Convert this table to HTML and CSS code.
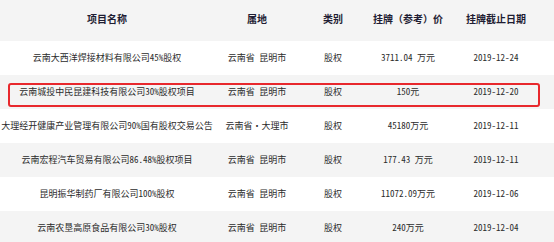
FILE: index.html
```html
<!DOCTYPE html>
<html lang="zh-CN">
<head>
<meta charset="utf-8">
<title>挂牌项目</title>
<link rel="stylesheet" href="styles.css">
</head>
<body>
<div class="table">
  <div class="row head">
    <div class="c">项目名称</div>
    <div class="c">属地</div>
    <div class="c">类别</div>
    <div class="c">挂牌（参考）价</div>
    <div class="c">挂牌截止日期</div>
  </div>
  <div class="row">
    <div class="c">云南大西洋焊接材料有限公司45%股权</div>
    <div class="c">云南省 昆明市</div>
    <div class="c">股权</div>
    <div class="c">3711.04 万元</div>
    <div class="c">2019-12-24</div>
  </div>
  <div class="row alt hl">
    <div class="c">云南城投中民昆建科技有限公司30%股权项目</div>
    <div class="c">云南省 昆明市</div>
    <div class="c">股权</div>
    <div class="c">150元</div>
    <div class="c">2019-12-20</div>
    <div class="mark"></div>
  </div>
  <div class="row">
    <div class="c wide">大理经开健康产业管理有限公司90%国有股权交易公告</div>
    <div class="c">云南省・大理市</div>
    <div class="c">股权</div>
    <div class="c">45180万元</div>
    <div class="c">2019-12-11</div>
  </div>
  <div class="row alt">
    <div class="c">云南宏程汽车贸易有限公司86.48%股权项目</div>
    <div class="c">云南省 昆明市</div>
    <div class="c">股权</div>
    <div class="c">177.43 万元</div>
    <div class="c">2019-12-11</div>
  </div>
  <div class="row">
    <div class="c">昆明振华制药厂有限公司100%股权</div>
    <div class="c">云南省 昆明市</div>
    <div class="c">股权</div>
    <div class="c">11072.09万元</div>
    <div class="c">2019-12-06</div>
  </div>
  <div class="row alt">
    <div class="c">云南农垦高原食品有限公司30%股权</div>
    <div class="c">云南省 昆明市</div>
    <div class="c">股权</div>
    <div class="c">240万元</div>
    <div class="c">2019-12-04</div>
  </div>
</div>
</body>
</html>
```
FILE: styles.css
```css
html, body {
  margin: 0;
  padding: 0;
  background: #ffffff;
}
.table {
  width: 554px;
  font-family: "Noto Sans Mono CJK SC", "Noto Sans CJK SC", "DejaVu Sans", sans-serif;
  font-size: 9px;
  color: #2b2b2b;
}
.row {
  display: grid;
  grid-template-columns: 214px 86px 66px 84px 92px 12px;
  height: 34px;
  align-items: center;
  position: relative;
}
.row.head {
  height: 41px;
  background: #f4f4f4;
  font-size: 10px;
  font-weight: bold;
  color: #1f1d33;
  font-family: "Noto Sans CJK SC", sans-serif;
  padding-bottom: 3px;
  box-sizing: border-box;
}
.row.alt {
  background: #f4f4f4;
}
.c {
  text-align: center;
  white-space: nowrap;
  line-height: 12px;
}
.mark {
  position: absolute;
  left: 8px;
  top: 8px;
  width: 532px;
  height: 24px;
  box-sizing: border-box;
  border: 2px solid #e8282d;
  border-radius: 3px;
}
```
